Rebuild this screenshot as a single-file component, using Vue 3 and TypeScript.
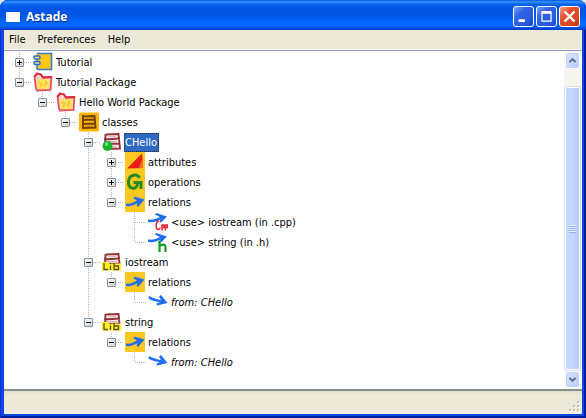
<script setup lang="ts">
import { computed, ref } from 'vue'

interface TreeNode {
  label: string
  depth: number
  icon: string
  state: 'open' | 'closed' | 'leaf'
  italic?: boolean
}

const menus: string[] = ['File', 'Preferences', 'Help']

const nodes: TreeNode[] = [
  { label: 'Tutorial', depth: 0, icon: 'component', state: 'closed' },
  { label: 'Tutorial Package', depth: 0, icon: 'package', state: 'open' },
  { label: 'Hello World Package', depth: 1, icon: 'package', state: 'open' },
  { label: 'classes', depth: 2, icon: 'classes', state: 'open' },
  { label: 'CHello', depth: 3, icon: 'class', state: 'open' },
  { label: 'attributes', depth: 4, icon: 'attributes', state: 'closed' },
  { label: 'operations', depth: 4, icon: 'operations', state: 'closed' },
  { label: 'relations', depth: 4, icon: 'relations', state: 'open' },
  { label: '<use> iostream (in .cpp)', depth: 5, icon: 'use-cpp', state: 'leaf' },
  { label: '<use> string (in .h)', depth: 5, icon: 'use-h', state: 'leaf' },
  { label: 'iostream', depth: 3, icon: 'library', state: 'open' },
  { label: 'relations', depth: 4, icon: 'relations', state: 'open' },
  { label: 'from: CHello', depth: 5, icon: 'from', state: 'leaf', italic: true },
  { label: 'string', depth: 3, icon: 'library', state: 'open' },
  { label: 'relations', depth: 4, icon: 'relations', state: 'open' },
  { label: 'from: CHello', depth: 5, icon: 'from', state: 'leaf', italic: true },
]

const selected = ref(4)

function continues(index: number, level: number): boolean {
  for (let i = index + 1; i < nodes.length; i++) {
    if (nodes[i].depth < level) return false
    if (nodes[i].depth === level) return true
  }
  return false
}

const rows = computed(() =>
  nodes.map((node, index) => ({
    ...node,
    guides: Array.from({ length: node.depth }, (_, level) => continues(index, level)),
    last: !continues(index, node.depth),
  })),
)
</script>

<template>
  <svg class="sprite" aria-hidden="true">
    <symbol id="component" viewBox="0 0 20 20">
      <path d="M3 1.500h15.500v16.500H4z" fill="#ffc814" />
      <path d="M4 1.500h14.500v16H5L3.500 16" fill="none" stroke="#3a78d0" stroke-width="1.600" />
      <path d="M4 8v1m0 4v4" stroke="#3a78d0" stroke-width="1.600" />
      <rect x="1" y="4" width="6" height="3" rx="1" fill="#ffe060" stroke="#2f6fd0" stroke-width="1.500" />
      <rect x="1" y="9.500" width="6" height="3" rx="1" fill="#ffe060" stroke="#2f6fd0" stroke-width="1.500" />
    </symbol>
    <symbol id="package" viewBox="0 0 20 20">
      <path d="M3 17.500 1.500 4 4 1.500 8 3l2 2.500 8.500-.5-1 13-14.500.500z" fill="#ffd0c4" />
      <path d="M4 7.500 16.500 7 16 17 4.500 17.500z" fill="#ffe25a" />
      <path d="M3 17.500 1.500 4 4 1.500 8 2.500 10 5.500 18.500 5 17.500 18 3 18.500" fill="none" stroke="#e6505c" stroke-width="1.800" />
      <path d="M1.500 5 4 1.500 8 2.500 10 5.500 18.500 5" fill="none" stroke="#d82838" stroke-width="1.800" />
      <path d="m6 10 3 2-2 3m5-6 2 2-3 3" fill="none" stroke="#ffba30" stroke-width="1.300" />
    </symbol>
    <symbol id="classes" viewBox="0 0 20 20">
      <rect width="20" height="19" y=".5" rx="1.500" fill="#ffb60c" />
      <path d="M4 4.500 15.500 4 16.500 15.500 4 16zM4 3v13M3 8l13-.5M4 12l12-.5" fill="none" stroke="#70400a" stroke-width="1.900" />
      <path d="m6 6 8-.5M6 14h8" stroke="#c98808" />
    </symbol>
    <symbol id="card" viewBox="0 0 20 20">
      <path d="M3 2 17 1.500 18 17 2 17.500z" fill="#fbf4f2" />
      <path d="M4 2.500 16.500 2 18 16.500 3 17 3.500 2M2 7.500 18 6.500M2.500 12l15-.5" fill="none" stroke="#93323a" stroke-width="1.900" />
      <path d="M6 4.800 14 4.500M5 9.700 15 9.300M6 14.300h9" stroke="#dcb0b2" />
    </symbol>
    <symbol id="class" viewBox="0 0 20 20">
      <use href="#card" />
      <circle cx="5.500" cy="14" r="5" fill="#16b52b" />
      <circle cx="4.500" cy="12" r="1.700" fill="#7be487" />
    </symbol>
    <symbol id="library" viewBox="0 0 20 20">
      <use href="#card" />
      <path d="M0 10h6l1 1.500h12v7H0z" fill="#fff12a" />
      <path d="M2 11v6.500h4M8.500 13.500v4.500M8.500 11v1.200M12 11v6.500h4.500v-3.500h-4" fill="none" stroke="#5c5110" stroke-width="1.300" />
    </symbol>
    <symbol id="attributes" viewBox="0 0 20 20">
      <rect width="20" height="20" fill="#ffc820" />
      <path d="M17 1.500 18 16 2 16.500z" fill="#e81c16" />
      <path d="M18 4v12h-4z" fill="#ff6a20" />
    </symbol>
    <symbol id="operations" viewBox="0 0 20 20">
      <rect width="20" height="20" fill="#ffc820" />
      <path d="M14.500 6C13 1.500 4 2 3.500 9.500 3.200 18 12 18.500 12.500 11.500M8.500 10.500H16V17" fill="none" stroke="#238a1c" stroke-width="3" />
    </symbol>
    <symbol id="relations" viewBox="0 0 20 20">
      <rect width="20" height="20" fill="#ffc820" />
      <path d="M1 11.500C5 12 8 11 12 8.500L8.500 6.500 9.500 4.500 19.500 7.500 13 15l-1.500-1.500 1-2.500C9 13.500 5 14.500 1 14z" fill="#1f6cf0" />
    </symbol>
    <symbol id="use-arrow" viewBox="0 0 20 20">
      <path d="M0 7.500C5 8 8 7 12 5L7 2.500 8 1 19 4.500 13 10.500 11.500 9.500l1-2C9 9.500 5 10.500 0 10z" fill="#1f6cf0" />
    </symbol>
    <symbol id="use-cpp" viewBox="0 0 20 20">
      <use href="#use-arrow" />
      <path d="M11 9C7.500 9 7 18 10.500 17.500l2-1.500M14 12.500v6M14 13h2v2.500h-2M17.500 12.500v6M17.500 13h2v2.500h-2" fill="none" stroke="#e82432" stroke-width="1.500" />
    </symbol>
    <symbol id="use-h" viewBox="0 0 20 20">
      <use href="#use-arrow" />
      <path d="M11.500 8.500V20M11.500 15c1-3 6-3.500 6 0v5" fill="none" stroke="#169b27" stroke-width="2.200" />
    </symbol>
    <symbol id="from" viewBox="0 0 20 20">
      <path d="M1 4C5 6 9 7.500 13 8L11 4.500 13 3 19.500 11 9 13.500 8.500 11.500 12 10C8 10 4 8.500 .5 6.500z" fill="#1f6cf0" />
    </symbol>
  </svg>

  <div class="window">
    <header class="titlebar">
      <span class="app-icon"></span>
      <h1 class="title">Astade</h1>
      <button class="caption" type="button" aria-label="Minimize">
        <svg viewBox="0 0 21 21"><path d="M5 15h7" stroke="#fff" stroke-width="3" /></svg>
      </button>
      <button class="caption" type="button" aria-label="Maximize">
        <svg viewBox="0 0 21 21">
          <path d="M5.500 6v9.500h10V6" fill="none" stroke="#fff" stroke-width="1.400" />
          <path d="M5 6h11" stroke="#fff" stroke-width="3" />
        </svg>
      </button>
      <button class="caption close" type="button" aria-label="Close">
        <svg viewBox="0 0 21 21"><path d="m5 5 11 11m0-11-11 11" stroke="#fff" stroke-width="2.600" /></svg>
      </button>
    </header>

    <nav class="menubar">
      <button v-for="menu in menus" :key="menu" class="menu" type="button">{{ menu }}</button>
    </nav>

    <main class="content">
      <ul class="tree" role="tree" aria-label="Model">
        <li
          v-for="(row, index) in rows"
          :key="index"
          class="row"
          role="treeitem"
          :aria-level="row.depth + 1"
          :aria-selected="index === selected"
        >
          <span v-for="(line, level) in row.guides" :key="level" class="guide" :class="{ line }"></span>
          <span class="guide branch" :class="row.last ? 'last' : 'line'">
            <button
              v-if="row.state !== 'leaf'"
              class="toggle"
              :class="row.state"
              type="button"
              :aria-label="row.state === 'open' ? 'Collapse' : 'Expand'"
            ></button>
          </span>
          <svg class="icon" aria-hidden="true"><use :href="'#' + row.icon" /></svg>
          <span
            class="label"
            :class="{ selected: index === selected, italic: row.italic }"
            @click="selected = index"
          >{{ row.label }}</span>
        </li>
      </ul>

      <div class="scrollbar">
        <button class="scroll-button" type="button" aria-label="Scroll up">
          <svg viewBox="0 0 15 15"><path d="m4 9.500 3.500-3.500L11 9.500" /></svg>
        </button>
        <div class="track"><div class="thumb"><span class="grip"></span></div></div>
        <button class="scroll-button" type="button" aria-label="Scroll down">
          <svg viewBox="0 0 15 15"><path d="m4 5.500 3.500 3.500L11 5.500" /></svg>
        </button>
      </div>
    </main>

    <footer class="statusbar">
      <svg class="resize" viewBox="0 0 12 12" aria-hidden="true">
        <path d="M9 1h2v2H9zM5 5h2v2H5zM9 5h2v2H9zM1 9h2v2H1zM5 9h2v2H5zM9 9h2v2H9z" fill="#fff" />
        <path d="M8 0h2v2H8zM4 4h2v2H4zM8 4h2v2H8zM0 8h2v2H0zM4 8h2v2H4zM8 8h2v2H8z" fill="#c3bfac" />
      </svg>
    </footer>
  </div>
</template>

<style>
body {
  margin: 0;
  background: #e6e8dc;
}
</style>

<style scoped>
.sprite {
  position: absolute;
  width: 0;
  height: 0;
}

.window {
  display: flex;
  flex-direction: column;
  box-sizing: border-box;
  min-height: 100vh;
  padding: 0 4px 4px;
  border-radius: 8px 8px 0 0;
  background: #0a48e0;
  box-shadow: inset 1px 0 #0831d9, inset -2px -2px #001ea0;
  font-family: "DejaVu Sans Condensed", "DejaVu Sans", sans-serif;
  font-size: 11px;
  color: #000;
  overflow: hidden;
}

button {
  margin: 0;
  padding: 0;
  border: 0;
  font: inherit;
  color: inherit;
}

.titlebar {
  display: flex;
  align-items: center;
  gap: 2px;
  height: 30px;
  box-sizing: border-box;
  margin: 0 -4px;
  padding: 3px 6px 0;
  background: linear-gradient(#0058e6 0, #3a93ff 2px, #0a66ee 4px, #0055e5 8px, #0055e5 15px, #0066ff 22px, #0066fc 26px, #0045d0 29px, #003bc0 30px);
}

.app-icon {
  width: 14px;
  height: 10px;
  border-radius: 1px;
  background: #fff;
}

.title {
  flex: 1;
  margin: 0 0 0 4px;
  font-family: "Open Sans", sans-serif;
  font-size: 12px;
  font-weight: 700;
  line-height: 20px;
  color: #fff;
  text-shadow: 1px 1px #0a2f8c;
}

.caption {
  width: 21px;
  height: 21px;
  box-sizing: border-box;
  border: 1px solid #fff;
  border-radius: 3px;
  background: linear-gradient(135deg, #7a9ff4, #2f62e4 35%, #2a5ce0 70%, #1b49c8);
}

.caption svg {
  display: block;
  width: 100%;
  height: 100%;
}

.caption.close {
  background: linear-gradient(135deg, #f0a084, #e0532e 35%, #dd4a22 70%, #b8330f);
}

.menubar {
  display: flex;
  height: 20px;
  box-sizing: border-box;
  border-bottom: 1px solid #f8f7f0;
  background: #ece9d8;
}

.menu {
  padding: 0 6px;
  background: none;
  line-height: 18px;
}

.menu:first-child {
  padding-left: 5px;
}

.content {
  display: flex;
  flex: 1;
  border-top: 1px solid #8d9cc4;
  border-bottom: 2px solid #84908f;
  background: #fff;
}

.tree {
  flex: 1;
  min-width: 0;
  margin: 0;
  padding: 1px 0 0 4px;
  list-style: none;
}

.row {
  display: flex;
  align-items: center;
  height: 20px;
}

.guide {
  position: relative;
  flex: none;
  width: 23px;
  height: 20px;
}

.guide.line,
.guide.last {
  background: repeating-linear-gradient(#b4b4b4 0 1px, transparent 1px 2px) 11px 0 / 1px 100% no-repeat;
}

.guide.last {
  background-size: 1px 10px;
}

.branch {
  display: flex;
  align-items: center;
  justify-content: center;
}

.branch::after {
  content: "";
  position: absolute;
  top: 10px;
  left: 12px;
  width: 12px;
  height: 1px;
  background: repeating-linear-gradient(90deg, #b4b4b4 0 1px, transparent 1px 2px);
}

.toggle {
  z-index: 1;
  width: 9px;
  height: 9px;
  border: 1px solid #7b92b2;
  border-radius: 1px;
  box-sizing: border-box;
  background:
    linear-gradient(#000, #000) center / 5px 1px no-repeat,
    linear-gradient(135deg, #fff, #d4cfc0);
}

.toggle.closed {
  background:
    linear-gradient(#000, #000) center / 5px 1px no-repeat,
    linear-gradient(#000, #000) center / 1px 5px no-repeat,
    linear-gradient(135deg, #fff, #d4cfc0);
}

.icon {
  flex: none;
  width: 20px;
  height: 20px;
  margin-left: 2px;
}

.label {
  padding: 1px 2px 0 1px;
  margin-left: 2px;
  line-height: 18px;
  white-space: nowrap;
  cursor: default;
}

.label.italic {
  font-style: italic;
}

.label.selected {
  background: #316ac5;
  color: #fff;
  outline: 1px dotted #2b2417;
  outline-offset: -1px;
}

.scrollbar {
  display: flex;
  flex-direction: column;
  width: 17px;
  margin-right: 1px;
  padding: 1px 0;
  box-sizing: border-box;
  background: #f6f5ee;
}

.scroll-button {
  height: 17px;
  margin: 0 1px;
  border: 1px solid #fff;
  border-radius: 3px;
  box-sizing: border-box;
  background: linear-gradient(135deg, #dbe5ff, #b7cafa);
  box-shadow: inset 0 0 0 1px #c0d0f8;
}

.scroll-button svg {
  display: block;
  width: 100%;
  height: 100%;
  fill: none;
  stroke: #4d6185;
  stroke-width: 2;
}

.track {
  display: flex;
  flex: 1;
  padding: 18px 1px 1px;
}

.thumb {
  display: flex;
  flex: 1;
  align-items: center;
  justify-content: center;
  border: 1px solid #fff;
  border-radius: 2px;
  background: linear-gradient(90deg, #c9d8ff, #c4d4fe 60%, #b4c6f4);
  box-shadow: 0 0 0 1px #d3dcf2;
}

.grip {
  width: 7px;
  height: 8px;
  background: repeating-linear-gradient(#eef4ff 0 1px, #8cb0f8 1px 2px);
}

.statusbar {
  display: flex;
  align-items: flex-end;
  justify-content: flex-end;
  height: 23px;
  box-sizing: border-box;
  padding: 0 1px 1px;
  background: linear-gradient(#e3dfca, #ece9d8 4px, #ece9d8 18px, #f3f1e4);
}

.resize {
  width: 12px;
  height: 12px;
}
</style>
